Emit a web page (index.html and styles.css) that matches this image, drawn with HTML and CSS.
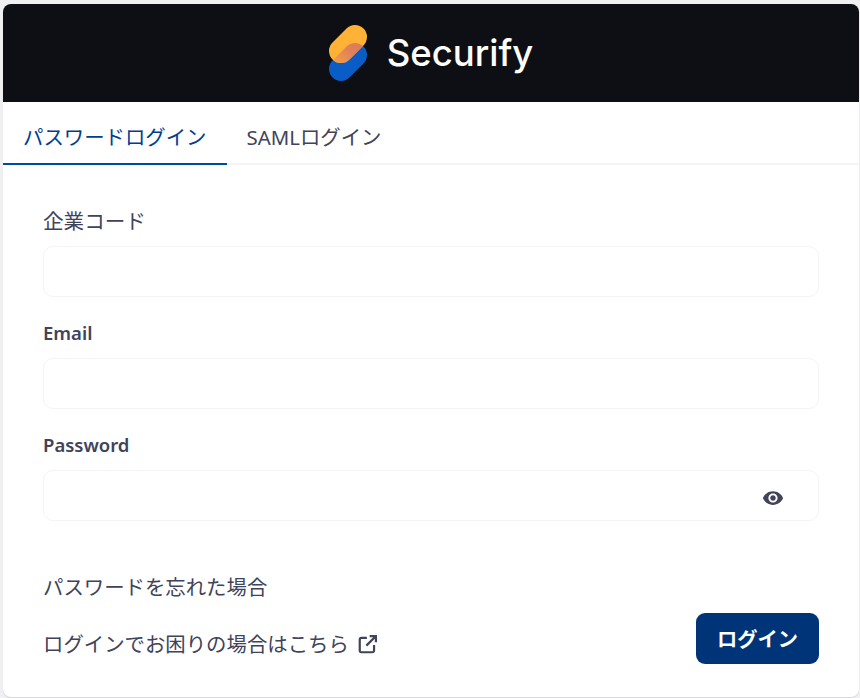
FILE: index.html
```html
<!DOCTYPE html>
<html lang="ja">
<head>
  <meta charset="UTF-8"/>
  <meta name="viewport" content="width=device-width, initial-scale=1.0"/>
  <title>Securify - ログイン</title>
  <link rel="stylesheet" href="styles.css">
</head>
<body>

  <div class="card">
    <header>
      <svg class="logo-mark" width="38" height="56" viewBox="0 0 38 56">
        <defs>
          <clipPath id="yellowPill">
            <rect x="-2.900" y="7" width="43.800" height="24" rx="12" transform="rotate(-45 19 19)"/>
          </clipPath>
          <linearGradient id="overlap" x1="0" y1="0.500" x2="1" y2="0.500">
            <stop offset="0.150" stop-color="#f5a93f"/>
            <stop offset="0.700" stop-color="#e2805a"/>
            <stop offset="1" stop-color="#dc7a5c"/>
          </linearGradient>
        </defs>
        <rect class="pill-blue" x="-2.900" y="25" width="43.800" height="24" rx="12" transform="rotate(-45 19 37)"/>
        <rect class="pill-yellow" x="-2.900" y="7" width="43.800" height="24" rx="12" transform="rotate(-45 19 19)"/>
        <g clip-path="url(#yellowPill)">
          <rect fill="url(#overlap)" x="-2.900" y="25" width="43.800" height="24" rx="12" transform="rotate(-45 19 37)"/>
        </g>
      </svg>
      <div class="logo-text">Securify</div>
    </header>

    <nav class="tabs">
      <a href="#" class="active">パスワードログイン</a>
      <a href="#">SAMLログイン</a>
    </nav>

    <form class="login-form">
      <div class="field">
        <label class="label-light">企業コード</label>
        <input type="text"/>
      </div>
      <div class="field">
        <label>Email</label>
        <input type="email"/>
      </div>
      <div class="field">
        <label>Password</label>
        <div class="password-box">
          <input type="password"/>
          <svg class="eye" width="22" height="22" viewBox="0 0 24 24">
            <path d="M12 4.500C7 4.500 2.730 7.610 1 12c1.730 4.390 6 7.500 11 7.500s9.270-3.110 11-7.500c-1.730-4.390-6-7.500-11-7.500zM12 17c-2.760 0-5-2.240-5-5s2.240-5 5-5 5 2.240 5 5-2.240 5-5 5zm0-8c-1.660 0-3 1.340-3 3s1.340 3 3 3 3-1.340 3-3-1.340-3-3-3z"/>
          </svg>
        </div>
      </div>

      <a href="#" class="forgot">パスワードを忘れた場合</a>

      <div class="form-bottom">
        <a href="#" class="help">
          ログインでお困りの場合はこちら
          <svg width="22" height="22" viewBox="0 0 20 20">
            <path d="M9 4.500H4a1.500 1.500 0 0 0-1.500 1.500v10A1.500 1.500 0 0 0 4 17.500h10a1.500 1.500 0 0 0 1.500-1.500v-5M8.500 11.500 17 3M11.500 2.800h5.700v5.700"/>
          </svg>
        </a>
        <button type="button">ログイン</button>
      </div>
    </form>
  </div>

</body>
</html>
```

FILE: styles.css
```css
html, body {
  height: 100%;
}

body {
  margin: 0;
  padding: 4px 1px 1px 3px;
  box-sizing: border-box;
  background: #f0f0f3;
  font-family: "Noto Sans", "Noto Sans CJK JP", sans-serif;
  color: #40435a;
  overflow: hidden;
}

.card {
  height: 693px;
  background: #fff;
  border-radius: 8px;
  overflow: hidden;
  box-shadow: 0 1px 1px #d4d4d8;
}

header {
  height: 97px;
  padding-bottom: 1px;
  background: #0e0f14;
  display: flex;
  justify-content: center;
  align-items: center;
  gap: 20px;
}

.logo-mark {
  flex: none;
}

.pill-blue {
  fill: #0a5cc7;
}

.pill-yellow {
  fill: #ffb236;
}

.logo-text {
  font-family: Inter, sans-serif;
  font-size: 36.500px;
  font-weight: 500;
  color: #fff;
}

.tabs {
  display: flex;
  height: 61px;
  border-bottom: 2px solid #f4f4f6;
}

.tabs a {
  height: 61px;
  padding: 0 20px;
  line-height: 71px;
  font-size: 20.400px;
  color: #40435a;
  text-decoration: none;
}

.tabs a.active {
  color: #003d8f;
  border-bottom: 2px solid #004a9f;
}

.login-form {
  padding: 43px 40px 0 40px;
}

.field {
  margin-bottom: 23px;
}

.field label {
  display: block;
  font-size: 18.500px;
  font-weight: 600;
  line-height: 26px;
  margin-bottom: 12px;
}

.field label.label-light {
  font-weight: 400;
  font-size: 20.600px;
}

.field input {
  display: block;
  width: 100%;
  height: 51px;
  box-sizing: border-box;
  border: 1px solid #f4f4f6;
  border-radius: 10px;
  outline: none;
  background: #fff;
}

.password-box {
  position: relative;
}

.eye {
  position: absolute;
  right: 35px;
  top: 17px;
  fill: #40435a;
}

.forgot,
.help {
  color: #40435a;
  font-size: 20.400px;
  text-decoration: none;
}

.forgot {
  display: block;
  margin-top: 52px;
  line-height: 28px;
}

.form-bottom {
  display: flex;
  justify-content: space-between;
  align-items: center;
  margin-top: 12px;
}

.help {
  display: flex;
  align-items: center;
  gap: 8px;
  padding-top: 8px;
}

.help svg {
  margin-top: 3px;
  fill: none;
  stroke: #40435a;
  stroke-width: 2;
}

button {
  width: 123px;
  height: 51px;
  border: none;
  border-radius: 9px;
  background: #003478;
  color: #fff;
  font-family: inherit;
  font-size: 20.250px;
  font-weight: 700;
}
```
